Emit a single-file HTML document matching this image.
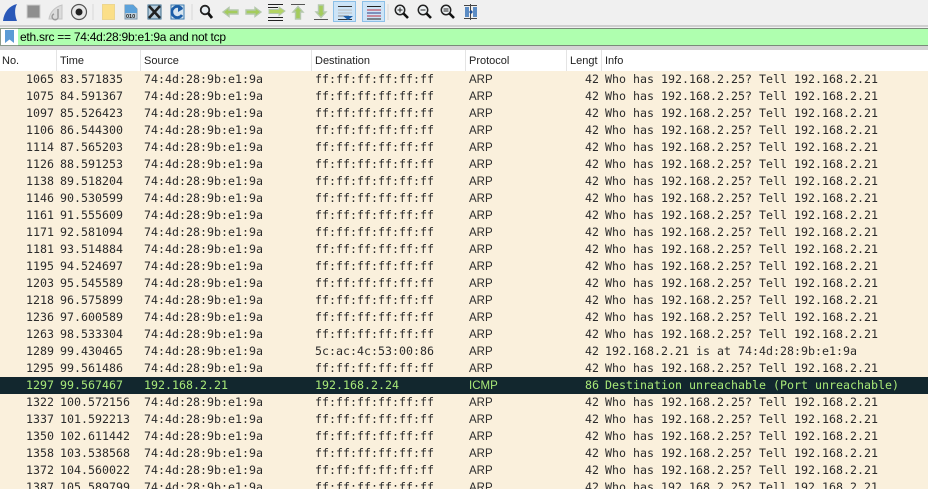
<!DOCTYPE html>
<html><head><meta charset="utf-8"><style>
html,body{margin:0;padding:0;width:928px;height:489px;overflow:hidden}
body{background:#fff;font-family:"Liberation Sans",sans-serif}
#w{position:relative;width:928px;height:489px;overflow:hidden}
#tb{position:absolute;left:0;top:0;width:928px;height:25px;background:#f0f0f0;border-bottom:2px solid #cfcfcf}
#fb{position:absolute;left:0;top:27px;width:928px;height:23px;background:#f0f0f0}
#bm{position:absolute;left:0;top:1px;width:18px;height:16px;background:#fff;border:1px solid #8a9a8a;border-right:0}
#f{position:absolute;left:18px;top:1px;width:910px;background:#afffaf;border-top:1px solid #7a8a7a;border-bottom:1px solid #7a8a7a;font-size:12px;letter-spacing:-.26px;line-height:17px;color:#000;padding-left:2px;box-sizing:border-box;height:18px;white-space:pre}
#bot{position:absolute;left:0;top:46px;width:928px;height:4px;background:#d4d4d4}
#hd{position:absolute;left:0;top:50px;width:928px;height:21px;background:#fff;font-size:11px;color:#222;line-height:23px}
#hd span{position:absolute;top:0;white-space:pre}
#hd i{position:absolute;top:0;width:1px;height:21px;background:#e4e4e4}
.r{position:absolute;left:0;width:928px;height:17px;background:#faf0dc;color:#2b2b2b;font:11.63px/17px "DejaVu Sans Mono",monospace;white-space:pre}
.r b{font-weight:normal;position:absolute;top:0}
.n{right:874px}.t{left:60px}.s{left:144px}.d{left:315px}.p{left:469px;font-family:"Liberation Sans",sans-serif;font-size:11.5px;line-height:19px}.l{right:329px}.i{left:605px}
.x{background:#12272e;color:#a8e878}
svg{position:absolute;left:0;top:0}
</style></head><body><div id="w">
<div id="tb">
<svg width="500" height="25" viewBox="0 0 500 25">
<path d="M3 21 C4 12 9 6 17 4 C14 9 15 16 17 21Z" fill="#2a58b8"/>
<rect x="27" y="5" width="13" height="13" fill="#8f8f8f" stroke="#cfcfcf"/>
<path d="M49 19 C50 12 55 7 62 5 L62 19Z" fill="#dcdcdc" stroke="#c4c4c4"/>
<path d="M58 9 v7 a3 3 0 1 1 -4 -2" fill="none" stroke="#9a9a9a" stroke-width="1.5"/>
<circle cx="79" cy="12" r="7.5" fill="#e8e8e8" stroke="#555" stroke-width="1.2"/>
<circle cx="79" cy="12" r="3.5" fill="#222"/>
<rect x="92.5" y="4" width="1" height="16" fill="#d8d8d8"/>
<path d="M102.500 4.500 H114.500 V19.500 H102.500Z" fill="#fbdf88" stroke="#ecd690"/>
<path d="M125 5 H133 L137 9 V19 H125Z" fill="#c4d2dc" stroke="#7a94a8"/>
<path d="M125 5 H133 L137 9 V13 H125Z" fill="#5ca2da"/>
<text x="126" y="18" font-family="Liberation Sans,sans-serif" font-size="5.5" font-weight="bold" fill="#222">010</text>
<path d="M148 5 H161 V19 H148Z" fill="#b8cedd" stroke="#3a6a8a"/>
<path d="M149 6 L160 18 M160 6 L149 18" stroke="#222" stroke-width="2.6"/>
<path d="M171 5 H184 V19 H171Z" fill="#d8e6f0" stroke="#3a7ab0"/>
<path d="M182 9 A5.500 5.500 0 1 0 182 15" fill="none" stroke="#1c5ea8" stroke-width="2.600"/>
<path d="M178 5 L183 9 L178 12Z" fill="#1c5ea8"/>
<rect x="191.500" y="4" width="1" height="16" fill="#d8d8d8"/>
<circle cx="205" cy="10" r="4.300" fill="#e8eef2" stroke="#222" stroke-width="1.800"/>
<path d="M208 13 L212 18" stroke="#111" stroke-width="2.800"/>
<path d="M223 12 L229 7.500 V10 H238 V14 H229 V16.500Z" fill="#a4cc5c" stroke="#b4c8ac" stroke-width="1.400"/>
<path d="M261 12 L255 7.500 V10 H246 V14 H255 V16.500Z" fill="#a4cc5c" stroke="#b4c8ac" stroke-width="1.400"/>
<path d="M268 4.500 H283 M268 7.500 H278 M268 17.500 H283 M268 20.500 H283" stroke="#222"/>
<path d="M285 11 L279 7 V9.500 H269 V13.500 H279 V15.500Z" fill="#b4d464" stroke="#b4c8ac"/>
<path d="M291 4.500 H305" stroke="#555"/>
<path d="M298 6.500 L303 12 H300.500 V19 H295.500 V12 H293Z" fill="#a4cc5c" stroke="#b4c8ac" stroke-width="1.400"/>
<path d="M314 19.500 H328" stroke="#555"/>
<path d="M321 17.500 L326 12 H323.500 V5 H318.500 V12 H316Z" fill="#a4cc5c" stroke="#b4c8ac" stroke-width="1.400"/>
<rect x="333.500" y="1.500" width="22" height="20" fill="#cde4f7" stroke="#8cc0e8"/>
<path d="M338 6.500 H352" stroke="#333"/><path d="M338 10 H352" stroke="#bbb"/><path d="M338 13 H352" stroke="#bbb"/><path d="M338 16 H349" stroke="#888"/><path d="M338 19.500 H352" stroke="#333"/>
<path d="M343 16 H353 L348 20Z" fill="#1c5ea8"/>
<rect x="362.500" y="1.500" width="22" height="20" fill="#cde4f7" stroke="#8cc0e8"/>
<path d="M367 6.500 H381 M367 19 H381" stroke="#222"/><path d="M367 10 H381 M367 16 H381" stroke="#c03040"/><path d="M367 13 H381" stroke="#2a3a80"/>
<rect x="387.500" y="4" width="1" height="16" fill="#d8d8d8"/>
<circle cx="400" cy="10" r="4.700" fill="#eef2f4" stroke="#222" stroke-width="1.500"/>
<path d="M403.500 13.500 L408 18" stroke="#111" stroke-width="2.600"/>
<path d="M397.500 10 H402.500 M400 7.500 V12.500" stroke="#222"/>
<circle cx="423" cy="10" r="4.700" fill="#eef2f4" stroke="#222" stroke-width="1.500"/>
<path d="M426.500 13.500 L431 18" stroke="#111" stroke-width="2.600"/>
<path d="M420.500 10 H425.500" stroke="#222"/>
<circle cx="446" cy="10" r="4.700" fill="#eef2f4" stroke="#222" stroke-width="1.500"/>
<path d="M449.500 13.500 L454 18" stroke="#111" stroke-width="2.600"/>
<path d="M443.500 9 H448.500 M443.500 11 H448.500" stroke="#222"/>
<rect x="465" y="7" width="4" height="10" fill="#5c8cc4"/><rect x="473" y="7" width="4" height="10" fill="#5c8cc4"/>
<path d="M464 5.500 H477 M464 18.500 H477 M470.500 4 V20" stroke="#444"/>
<path d="M469 12 L471 10 V14Z M473 12 L471 10 V14Z" fill="#1c4e98"/>
</svg>
</div>
<div id="fb"><div id="bm"><svg width="18" height="16"><path d="M4 1 H13 V14 L8.500 10.500 L4 14Z" fill="#5b9bd5"/></svg></div><div id="f">eth.src == 74:4d:28:9b:e1:9a and not tcp</div></div>
<div id="bot"></div>
<div id="hd"><span style="left:2px">No.</span><i style="left:56px"></i><span style="left:60px">Time</span><i style="left:140px"></i><span style="left:144px">Source</span><i style="left:311px"></i><span style="left:315px">Destination</span><i style="left:465px"></i><span style="left:469px">Protocol</span><i style="left:566px"></i><span style="left:570px">Lengt</span><i style="left:601px"></i><span style="left:605px">Info</span></div>
<div class="r" style="top:71px"><b class="n">1065</b><b class="t">83.571835</b><b class="s">74:4d:28:9b:e1:9a</b><b class="d">ff:ff:ff:ff:ff:ff</b><b class="p">ARP</b><b class="l">42</b><b class="i">Who has 192.168.2.25? Tell 192.168.2.21</b></div>
<div class="r" style="top:88px"><b class="n">1075</b><b class="t">84.591367</b><b class="s">74:4d:28:9b:e1:9a</b><b class="d">ff:ff:ff:ff:ff:ff</b><b class="p">ARP</b><b class="l">42</b><b class="i">Who has 192.168.2.25? Tell 192.168.2.21</b></div>
<div class="r" style="top:105px"><b class="n">1097</b><b class="t">85.526423</b><b class="s">74:4d:28:9b:e1:9a</b><b class="d">ff:ff:ff:ff:ff:ff</b><b class="p">ARP</b><b class="l">42</b><b class="i">Who has 192.168.2.25? Tell 192.168.2.21</b></div>
<div class="r" style="top:122px"><b class="n">1106</b><b class="t">86.544300</b><b class="s">74:4d:28:9b:e1:9a</b><b class="d">ff:ff:ff:ff:ff:ff</b><b class="p">ARP</b><b class="l">42</b><b class="i">Who has 192.168.2.25? Tell 192.168.2.21</b></div>
<div class="r" style="top:139px"><b class="n">1114</b><b class="t">87.565203</b><b class="s">74:4d:28:9b:e1:9a</b><b class="d">ff:ff:ff:ff:ff:ff</b><b class="p">ARP</b><b class="l">42</b><b class="i">Who has 192.168.2.25? Tell 192.168.2.21</b></div>
<div class="r" style="top:156px"><b class="n">1126</b><b class="t">88.591253</b><b class="s">74:4d:28:9b:e1:9a</b><b class="d">ff:ff:ff:ff:ff:ff</b><b class="p">ARP</b><b class="l">42</b><b class="i">Who has 192.168.2.25? Tell 192.168.2.21</b></div>
<div class="r" style="top:173px"><b class="n">1138</b><b class="t">89.518204</b><b class="s">74:4d:28:9b:e1:9a</b><b class="d">ff:ff:ff:ff:ff:ff</b><b class="p">ARP</b><b class="l">42</b><b class="i">Who has 192.168.2.25? Tell 192.168.2.21</b></div>
<div class="r" style="top:190px"><b class="n">1146</b><b class="t">90.530599</b><b class="s">74:4d:28:9b:e1:9a</b><b class="d">ff:ff:ff:ff:ff:ff</b><b class="p">ARP</b><b class="l">42</b><b class="i">Who has 192.168.2.25? Tell 192.168.2.21</b></div>
<div class="r" style="top:207px"><b class="n">1161</b><b class="t">91.555609</b><b class="s">74:4d:28:9b:e1:9a</b><b class="d">ff:ff:ff:ff:ff:ff</b><b class="p">ARP</b><b class="l">42</b><b class="i">Who has 192.168.2.25? Tell 192.168.2.21</b></div>
<div class="r" style="top:224px"><b class="n">1171</b><b class="t">92.581094</b><b class="s">74:4d:28:9b:e1:9a</b><b class="d">ff:ff:ff:ff:ff:ff</b><b class="p">ARP</b><b class="l">42</b><b class="i">Who has 192.168.2.25? Tell 192.168.2.21</b></div>
<div class="r" style="top:241px"><b class="n">1181</b><b class="t">93.514884</b><b class="s">74:4d:28:9b:e1:9a</b><b class="d">ff:ff:ff:ff:ff:ff</b><b class="p">ARP</b><b class="l">42</b><b class="i">Who has 192.168.2.25? Tell 192.168.2.21</b></div>
<div class="r" style="top:258px"><b class="n">1195</b><b class="t">94.524697</b><b class="s">74:4d:28:9b:e1:9a</b><b class="d">ff:ff:ff:ff:ff:ff</b><b class="p">ARP</b><b class="l">42</b><b class="i">Who has 192.168.2.25? Tell 192.168.2.21</b></div>
<div class="r" style="top:275px"><b class="n">1203</b><b class="t">95.545589</b><b class="s">74:4d:28:9b:e1:9a</b><b class="d">ff:ff:ff:ff:ff:ff</b><b class="p">ARP</b><b class="l">42</b><b class="i">Who has 192.168.2.25? Tell 192.168.2.21</b></div>
<div class="r" style="top:292px"><b class="n">1218</b><b class="t">96.575899</b><b class="s">74:4d:28:9b:e1:9a</b><b class="d">ff:ff:ff:ff:ff:ff</b><b class="p">ARP</b><b class="l">42</b><b class="i">Who has 192.168.2.25? Tell 192.168.2.21</b></div>
<div class="r" style="top:309px"><b class="n">1236</b><b class="t">97.600589</b><b class="s">74:4d:28:9b:e1:9a</b><b class="d">ff:ff:ff:ff:ff:ff</b><b class="p">ARP</b><b class="l">42</b><b class="i">Who has 192.168.2.25? Tell 192.168.2.21</b></div>
<div class="r" style="top:326px"><b class="n">1263</b><b class="t">98.533304</b><b class="s">74:4d:28:9b:e1:9a</b><b class="d">ff:ff:ff:ff:ff:ff</b><b class="p">ARP</b><b class="l">42</b><b class="i">Who has 192.168.2.25? Tell 192.168.2.21</b></div>
<div class="r" style="top:343px"><b class="n">1289</b><b class="t">99.430465</b><b class="s">74:4d:28:9b:e1:9a</b><b class="d">5c:ac:4c:53:00:86</b><b class="p">ARP</b><b class="l">42</b><b class="i">192.168.2.21 is at 74:4d:28:9b:e1:9a</b></div>
<div class="r" style="top:360px"><b class="n">1295</b><b class="t">99.561486</b><b class="s">74:4d:28:9b:e1:9a</b><b class="d">ff:ff:ff:ff:ff:ff</b><b class="p">ARP</b><b class="l">42</b><b class="i">Who has 192.168.2.25? Tell 192.168.2.21</b></div>
<div class="r x" style="top:377px"><b class="n">1297</b><b class="t">99.567467</b><b class="s">192.168.2.21</b><b class="d">192.168.2.24</b><b class="p">ICMP</b><b class="l">86</b><b class="i">Destination unreachable (Port unreachable)</b></div>
<div class="r" style="top:394px"><b class="n">1322</b><b class="t">100.572156</b><b class="s">74:4d:28:9b:e1:9a</b><b class="d">ff:ff:ff:ff:ff:ff</b><b class="p">ARP</b><b class="l">42</b><b class="i">Who has 192.168.2.25? Tell 192.168.2.21</b></div>
<div class="r" style="top:411px"><b class="n">1337</b><b class="t">101.592213</b><b class="s">74:4d:28:9b:e1:9a</b><b class="d">ff:ff:ff:ff:ff:ff</b><b class="p">ARP</b><b class="l">42</b><b class="i">Who has 192.168.2.25? Tell 192.168.2.21</b></div>
<div class="r" style="top:428px"><b class="n">1350</b><b class="t">102.611442</b><b class="s">74:4d:28:9b:e1:9a</b><b class="d">ff:ff:ff:ff:ff:ff</b><b class="p">ARP</b><b class="l">42</b><b class="i">Who has 192.168.2.25? Tell 192.168.2.21</b></div>
<div class="r" style="top:445px"><b class="n">1358</b><b class="t">103.538568</b><b class="s">74:4d:28:9b:e1:9a</b><b class="d">ff:ff:ff:ff:ff:ff</b><b class="p">ARP</b><b class="l">42</b><b class="i">Who has 192.168.2.25? Tell 192.168.2.21</b></div>
<div class="r" style="top:462px"><b class="n">1372</b><b class="t">104.560022</b><b class="s">74:4d:28:9b:e1:9a</b><b class="d">ff:ff:ff:ff:ff:ff</b><b class="p">ARP</b><b class="l">42</b><b class="i">Who has 192.168.2.25? Tell 192.168.2.21</b></div>
<div class="r" style="top:479px"><b class="n">1387</b><b class="t">105.589799</b><b class="s">74:4d:28:9b:e1:9a</b><b class="d">ff:ff:ff:ff:ff:ff</b><b class="p">ARP</b><b class="l">42</b><b class="i">Who has 192.168.2.25? Tell 192.168.2.21</b></div>
</div></body></html>
